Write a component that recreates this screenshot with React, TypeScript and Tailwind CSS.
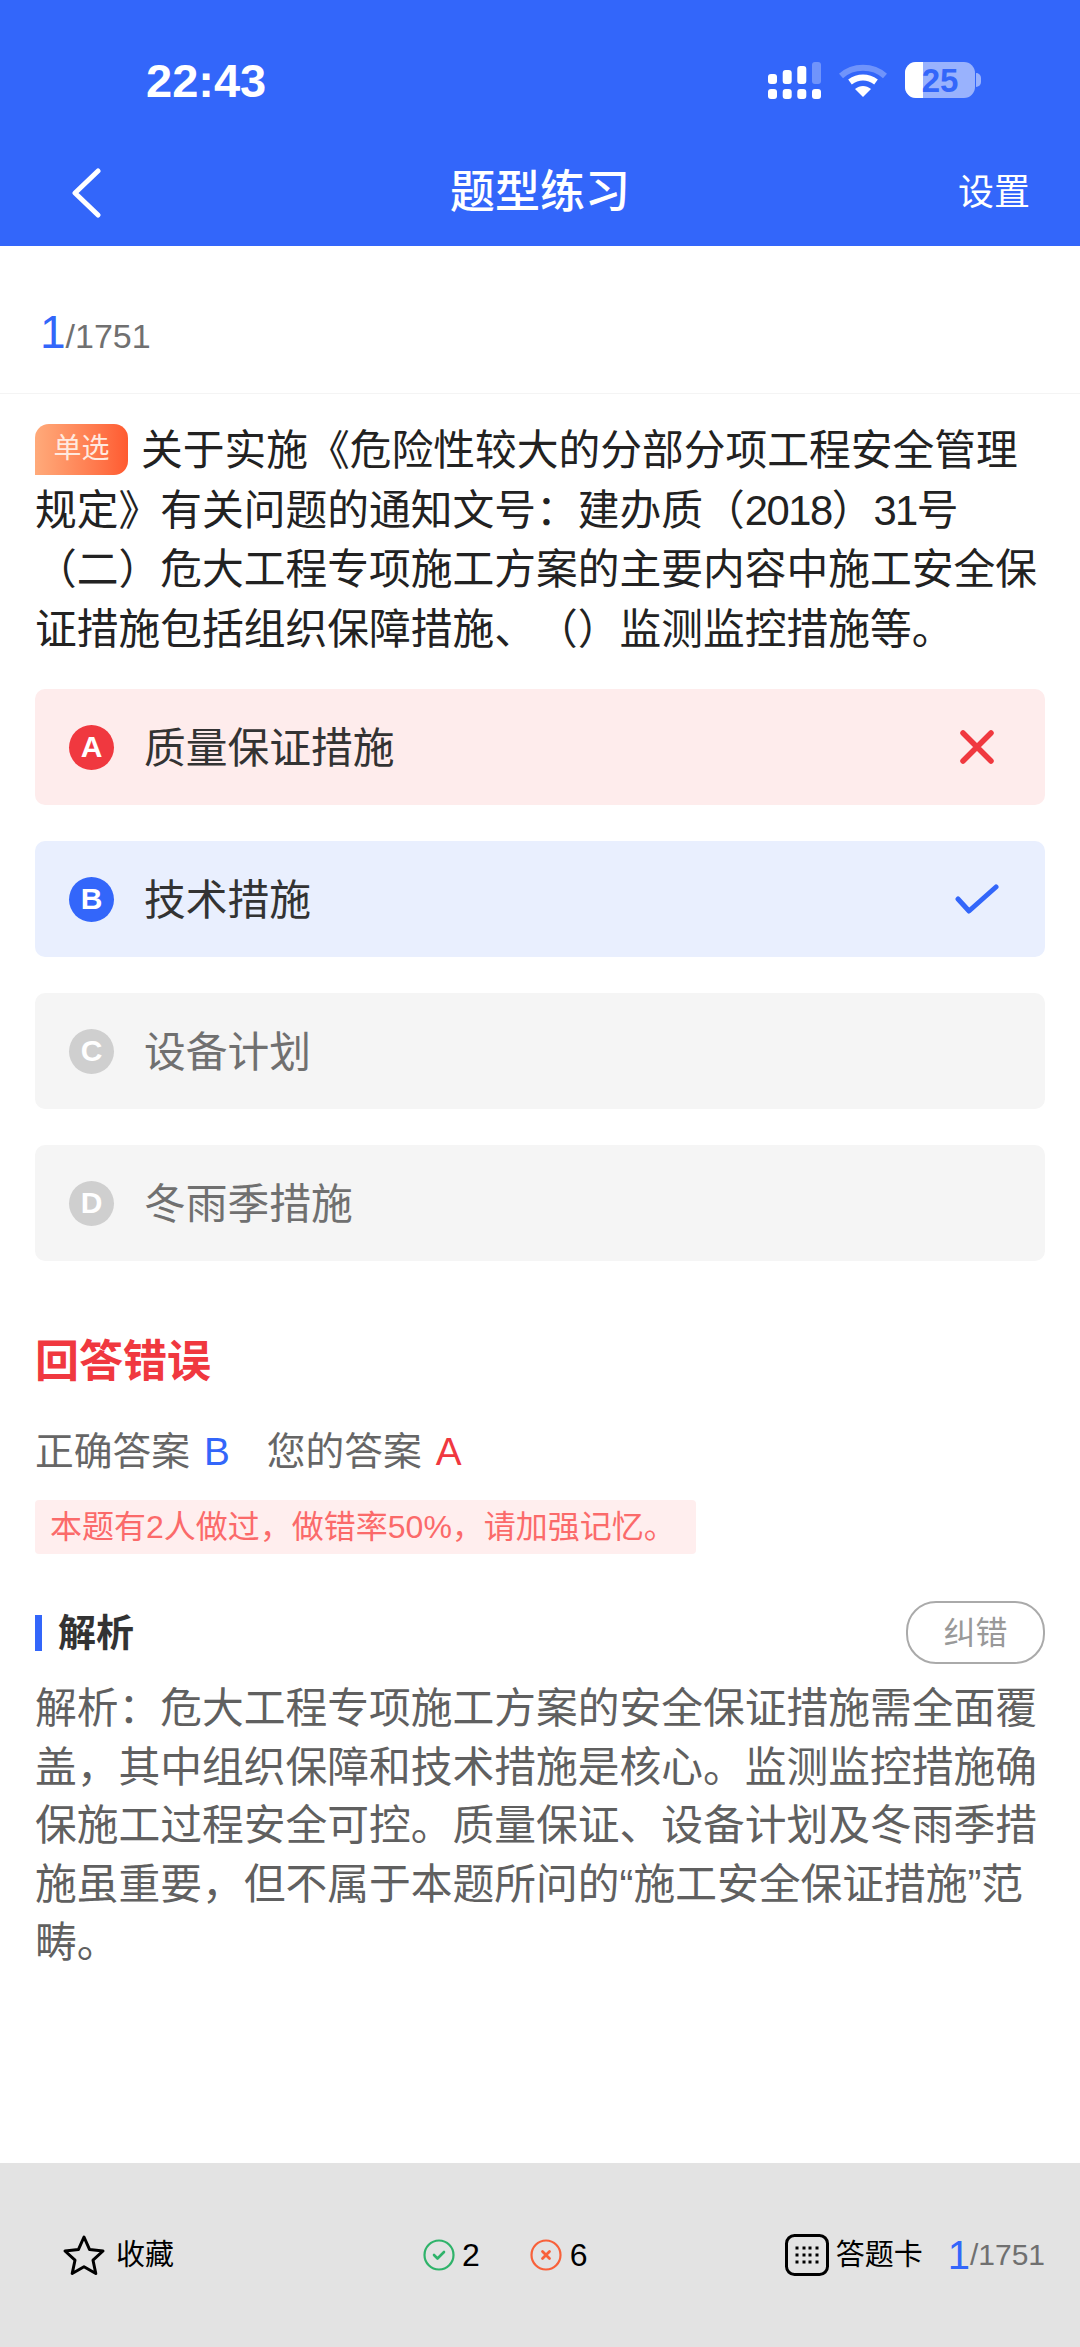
const sans = "font-['Liberation_Sans','Noto_Sans_CJK_SC',sans-serif]";

function Star() {
  return (
    <svg width="44" height="42" viewBox="0 0 44 42" fill="none" stroke="#000" strokeWidth="3" strokeLinejoin="round">
      <path d="M22 3l5.6 12.6 13.4 1.4-10 9.2 2.8 13.3L22 32.7l-11.8 6.8L13 26.2 3 17l13.4-1.4z" />
    </svg>
  );
}

function GridIcon() {
  return (
    <svg width="44" height="42" viewBox="0 0 44 42" fill="none">
      <rect x="1.5" y="1.5" width="41" height="39" rx="8" stroke="#000" strokeWidth="3" />
      {[14, 21, 28].map((y) => [12, 19, 25, 32].map((x) => <rect key={`${x}-${y}`} x={x - 1.5} y={y - 1.5} width="3" height="3" fill="#000" />))}
    </svg>
  );
}

function StatusIcons() {
  return (
    <div className="flex items-center">
      <svg width="53" height="37" viewBox="0 0 53 37">
        <g fill="#fff">
          <rect x="0" y="12" width="9" height="10" rx="3" />
          <rect x="14.7" y="8" width="9" height="14" rx="3" />
          <rect x="29.3" y="4" width="9" height="18" rx="3" />
          <rect x="0" y="27" width="9" height="10" rx="3" />
          <rect x="14.7" y="27" width="9" height="10" rx="3" />
          <rect x="29.3" y="27" width="9" height="10" rx="3" />
          <rect x="44" y="27" width="9" height="10" rx="3" />
        </g>
        <rect x="44" y="0" width="9" height="22" rx="3" fill="#fff" fillOpacity="0.3" />
      </svg>
      <svg className="ml-[18px]" width="48" height="36" viewBox="0 0 48 36" fill="none">
        <path d="M2 14C14 3 34 3 46 14" stroke="#fff" strokeOpacity="0.3" strokeWidth="6" />
        <path d="M11 20c8-6 18-6 26 0" stroke="#fff" strokeWidth="6" />
        <path d="M16 27c5-4 11-4 16 0l-8 8z" fill="#fff" />
      </svg>
      <div className="relative ml-[18px] flex h-[36px] w-[70px] items-center justify-center overflow-hidden rounded-[11px] bg-[#99b2fd]">
        <div className="absolute bottom-0 left-0 top-0 w-[18px] bg-white" />
        <span className={`relative text-[33px] font-bold leading-none text-[#3366fa] ${sans}`}>25</span>
      </div>
      <div className="ml-[1px] h-[14px] w-[5px] rounded-r-full bg-[#99b2fd]" />
    </div>
  );
}

function Option({ letter, text, bg, circle, color, mark }: { letter: string; text: string; bg: string; circle: string; color: string; mark?: "x" | "check" }) {
  return (
    <div className={`flex h-[116px] items-center rounded-[10px] pl-[34px] pr-[46px] ${bg}`}>
      <span className={`flex h-[45px] w-[45px] items-center justify-center rounded-full text-[30px] font-bold leading-none text-white ${circle} ${sans}`}>{letter}</span>
      <span className={`ml-[30px] flex-1 pt-[3px] text-[41.75px] leading-none ${color}`}>{text}</span>
      <div className="flex w-[44px] justify-center">
        {mark === "x" && (
          <svg width="34" height="34" viewBox="0 0 34 34" fill="none" stroke="#f0383f" strokeWidth="5.5" strokeLinecap="round">
            <path d="M3 3l28 28M31 3L3 31" />
          </svg>
        )}
        {mark === "check" && (
          <svg width="44" height="30" viewBox="0 0 44 30" fill="none" stroke="#3366fa" strokeWidth="5" strokeLinecap="round" strokeLinejoin="round">
            <path d="M3 15l11 12L41 3" />
          </svg>
        )}
      </div>
    </div>
  );
}

export default function App() {
  return (
    <div className={`flex h-[2347px] w-[1080px] flex-col bg-white text-[#222] [text-spacing-trim:space-all] ${sans}`}>
      <header className="h-[246px] bg-[#3366fa] text-white">
        <div className="flex h-[160px] items-center justify-between pl-[146px] pr-[99px]">
          <span className="text-[47px] font-bold leading-none">22:43</span>
          <StatusIcons />
        </div>
        <div className="relative flex h-[86px] items-center justify-center pb-[22px]">
          <svg className="absolute left-[70px] top-[8px]" width="32" height="50" viewBox="0 0 32 50" fill="none" stroke="#fff" strokeWidth="5" strokeLinecap="round" strokeLinejoin="round">
            <path d="M28 3L5 25l23 22" />
          </svg>
          <span className="text-[45px] font-medium leading-none">题型练习</span>
          <span className="absolute right-[50px] top-[15px] text-[36px] leading-none">设置</span>
        </div>
      </header>

      <div className="flex h-[148px] items-baseline border-b border-[#f4f4f4] pl-[40px] pt-[63px] text-[34px] leading-none text-[#707070]">
        <span className="text-[46px] text-[#3366fa]">1</span>
        <span>/1751</span>
      </div>

      <div className="px-[35px] pt-[27px] text-[41.75px] leading-[59.5px]">
        <span className="mr-[13px] mt-[3px] inline-block h-[51px] w-[93px] rounded-bl-none rounded-br-[14px] rounded-tl-[14px] rounded-tr-[14px] bg-gradient-to-r from-[#ffaa7a] to-[#ff5a30] text-center align-top text-[28px] leading-[50px] text-[#ffe9df]">单选</span>
        关于实施《危险性较大的分部分项工程安全管理
        <br />
        规定》有关问题的通知文号：建办质（<span className="tracking-[-1.5px]">2018</span>）<span className="tracking-[-1.5px]">31</span>号
        <br />
        （二）危大工程专项施工方案的主要内容中施工安全保
        <br />
        证措施包括组织保障措施、（）监测监控措施等。
      </div>

      <div className="mt-[30px] flex flex-col gap-[36px] px-[35px]">
        <Option letter="A" text="质量保证措施" bg="bg-[#feecec]" circle="bg-[#f0383f]" color="text-[#333]" mark="x" />
        <Option letter="B" text="技术措施" bg="bg-[#e9effe]" circle="bg-[#3366fa]" color="text-[#333]" mark="check" />
        <Option letter="C" text="设备计划" bg="bg-[#f5f5f5]" circle="bg-[#cfcfcf]" color="text-[#707070]" />
        <Option letter="D" text="冬雨季措施" bg="bg-[#f5f5f5]" circle="bg-[#cfcfcf]" color="text-[#707070]" />
      </div>

      <div className="mt-[75px] px-[35px]">
        <div className="text-[44px] font-bold leading-[52px] text-[#f0383f]">回答错误</div>
        <div className="mt-[40px] flex items-center text-[38.75px] leading-[48px] text-[#666]">
          <span>正确答案</span>
          <span className="ml-[14px] text-[#3366fa]">B</span>
          <span className="ml-[37px]">您的答案</span>
          <span className="ml-[14px] text-[#f0383f]">A</span>
        </div>
        <div className="mt-[24px] flex h-[54px] w-[661px] items-center rounded-[4px] bg-[#ffeeee] pl-[15px] text-[32px] leading-none text-[#fb6a6a]">
          本题有2人做过，做错率50%，请加强记忆。
        </div>
        <div className="mt-[47px] flex h-[63px] items-center justify-between">
          <div className="flex items-center">
            <span className="h-[36px] w-[7px] bg-[#3366fa]" />
            <span className="ml-[16px] text-[38px] font-bold leading-none text-[#333]">解析</span>
          </div>
          <span className="flex h-[63px] w-[139px] items-center justify-center rounded-[30px] border-2 border-[#aaa] text-[32px] leading-none text-[#999]">纠错</span>
        </div>
        <div className="mt-[16px] text-[41.75px] leading-[58.5px] text-[#606060]">
          解析：危大工程专项施工方案的安全保证措施需全面覆
          <br />
          盖，其中组织保障和技术措施是核心。监测监控措施确
          <br />
          保施工过程安全可控。质量保证、设备计划及冬雨季措
          <br />
          施虽重要，但不属于本题所问的“施工安全保证措施”范
          <br />
          畴。
        </div>
      </div>

      <footer className="mt-auto flex h-[184px] items-center bg-[#e3e3e3] pl-[62px] pr-[35px] text-[28px] leading-none text-black">
        <Star />
        <span className="ml-[10px] text-[29px]">收藏</span>
        <svg className="ml-[249px]" width="32" height="32" viewBox="0 0 32 32" fill="none" strokeLinecap="round" strokeLinejoin="round">
          <circle cx="16" cy="16" r="14.5" stroke="#2fb36a" strokeWidth="2.2" />
          <path d="M11 16l3.5 3.5 6.5-6.5" stroke="#2fb36a" strokeWidth="2.6" />
        </svg>
        <span className="ml-[7px] text-[32px]">2</span>
        <svg className="ml-[50px]" width="32" height="32" viewBox="0 0 32 32" fill="none" strokeLinecap="round">
          <circle cx="16" cy="16" r="14.5" stroke="#f8613a" strokeWidth="2.2" />
          <path d="M12.5 12.5l7 7M19.5 12.5l-7 7" stroke="#f8613a" strokeWidth="2.8" />
        </svg>
        <span className="ml-[8px] text-[32px]">6</span>
        <div className="ml-auto flex items-center">
          <GridIcon />
          <span className="ml-[7px] text-[29px]">答题卡</span>
          <span className="ml-[25px] text-[40px] text-[#3366fa]">1</span>
          <span className="text-[30px] text-[#707070]">/1751</span>
        </div>
      </footer>
    </div>
  );
}
